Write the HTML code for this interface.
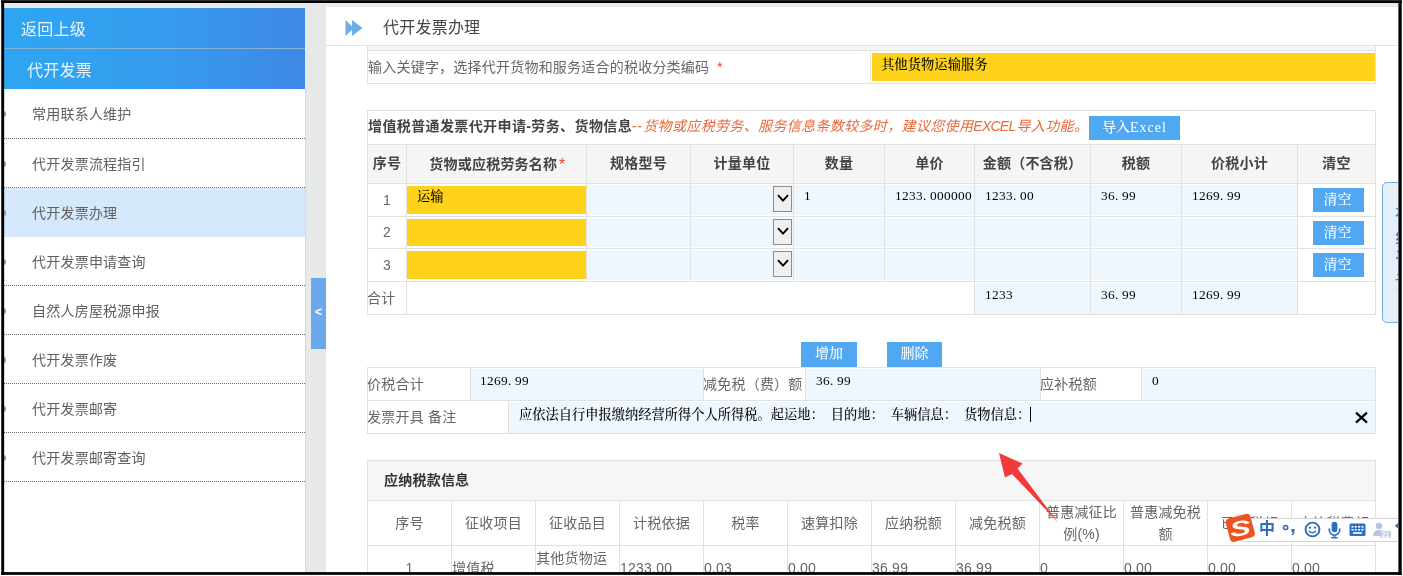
<!DOCTYPE html>
<html lang="zh-CN">
<head>
<meta charset="utf-8">
<title>代开发票办理</title>
<style>
*{box-sizing:border-box;margin:0;padding:0}
html,body{width:1403px;height:576px;overflow:hidden;background:#fff}
body{font-family:"Liberation Sans","Noto Sans CJK SC",sans-serif;font-size:14px;color:#555;position:relative;letter-spacing:.22px}
.abs{position:absolute}
#page{position:absolute;left:0;top:0;width:1403px;height:576px;overflow:hidden;background:#fff}
#inner{position:absolute;left:4px;top:3px;width:1394px;height:569px;background:#e9eaea;overflow:hidden;filter:blur(.35px)}
/* frame */
#frame{position:absolute;left:0;top:0;z-index:50}
#frametop{position:absolute;left:2px;top:0;width:1398px;height:1px;background:#2b2b2b;z-index:51}
/* sidebar : coordinates relative to #inner (offset 4,3) */
#side{position:absolute;left:0;top:5px;width:301px;height:564px;background:#fff}
#sidehead{position:absolute;left:0;top:0;width:301px;height:81px;background:linear-gradient(90deg,#2fa6f1 0%,#359cee 50%,#3e88e5 100%);color:#fff}
#sidehead .l1{position:absolute;left:17px;top:1px;height:40px;line-height:41px;font-size:16px;color:#e8f6ff}
#sidehead .sep{position:absolute;left:0;top:40px;width:301px;height:1px;background:#86b4d8}
#sidehead .l2{position:absolute;left:23px;top:42px;height:40px;line-height:41px;font-size:16px;color:#e8f6ff}
.mi{position:absolute;left:0;width:301px;height:49px;border-bottom:1px dotted #6a6a6a;line-height:51px;padding-left:28px;font-size:14px;color:#606060}
.mi.on{background:#d6e8fb}
.mi i{position:absolute;left:-3px;top:22px;width:5px;height:6px;border-radius:3px;background:#9a9a9a}
#gut{position:absolute;left:301px;top:0;width:21px;height:569px;background:#e7e9e8}
#handle{position:absolute;left:307px;top:275px;width:15px;height:71px;background:#6ba9ec;color:#fff;font-size:12px;font-weight:bold;line-height:69px;text-align:center;font-family:"Liberation Sans",sans-serif}
/* main */
#main{position:absolute;left:322px;top:4px;width:1072px;height:565px;background:#fff;overflow:hidden}
#mhead{position:absolute;left:0;top:0;width:1072px;height:39px;border-bottom:1px solid #e2e2e2}
#mhead .t{position:absolute;left:57px;top:0;line-height:41px;font-size:16px;color:#444}
#mhead svg{position:absolute;left:19px;top:12px}
table{border-collapse:collapse;table-layout:fixed;position:absolute}
td,th{border:1px solid #dedede;overflow:hidden;white-space:nowrap;font-weight:normal;padding:0;vertical-align:middle}
.inp{font-family:"Liberation Serif","Noto Serif CJK SC",serif;font-size:13.33px;color:#000;word-spacing:3.67px;letter-spacing:0;font-weight:500}
.dig{letter-spacing:.33px}
.dot{display:inline-block;width:7px;letter-spacing:0}
.blue{background:#eef6fe}
.yel{background:#ffd21c}
.btn{position:absolute;background:#4fa8f1;color:#fff;text-align:center;font-size:14px}
#ctw{position:absolute;left:0;top:39px;width:1072px;height:526px;overflow:hidden}
#ct{position:absolute;left:-326px;top:-46px;width:1403px;height:576px}
.lab{font-size:14px;color:#666}
.ttl{font-size:14px;letter-spacing:.39px;font-weight:bold;color:#444}
.ttl2{font-size:14px;font-weight:bold;color:#333}
.red{font-size:14px;letter-spacing:.35px;font-style:italic;color:#e8693c}
.th{font-size:14px;font-weight:bold;color:#444;text-align:center}
.num{font-size:14px;color:#666;text-align:center}
</style>
</head>
<body>
<div id="page">
<div id="inner">
  <div id="side">
    <div id="sidehead">
      <div class="l1">返回上级</div>
      <div class="sep"></div>
      <div class="l2">代开发票</div>
    </div>
    <div class="mi" style="top:81px;height:50px"><i></i>常用联系人维护</div>
    <div class="mi" style="top:131px;height:49px"><i></i>代开发票流程指引</div>
    <div class="mi on" style="top:180px;height:49px;border-bottom:none"><i></i>代开发票办理</div>
    <div class="mi" style="top:229px"><i></i>代开发票申请查询</div>
    <div class="mi" style="top:278px"><i></i>自然人房屋税源申报</div>
    <div class="mi" style="top:327px"><i></i>代开发票作废</div>
    <div class="mi" style="top:376px"><i></i>代开发票邮寄</div>
    <div class="mi" style="top:425px"><i></i>代开发票邮寄查询</div>
  </div>
  <div id="gut"></div><div class="abs" style="left:301px;top:86px;width:1px;height:483px;background:#d7d8da"></div>
  <div id="handle">&lt;</div>
  <div id="main">
    <div id="mhead">
      <svg width="19" height="18" viewBox="0 0 19 18"><path d="M0.5 1 L9 9 L0.5 17 Z M7 1 L17.5 9 L7 17 Z" fill="#6caeea"/></svg>
      <div class="t">代开发票办理</div>
    </div>
    <!--CS-->
<div id="ctw"><div id="ct">
<div class="abs" style="left:367px;top:40px;width:1px;height:44px;background:#e1e1e1"></div>
<div class="abs" style="left:1375px;top:40px;width:1px;height:44px;background:#e1e1e1"></div>
<div class="abs" style="left:367px;top:50px;width:1009px;height:1px;background:#e1e1e1"></div>
<div class="abs" style="left:367px;top:83px;width:1009px;height:1px;background:#e1e1e1"></div>
<div class="abs" style="left:870px;top:51px;width:1px;height:32px;background:#e8e8e8"></div>
<div class="abs lab" style="left:368px;top:51px;width:500px;height:32px;line-height:32px;white-space:nowrap;">输入关键字，选择代开货物和服务适合的税收分类编码 <span style="color:#e8442e;font-style:italic;margin-left:3px">*</span></div>
<div class="abs" style="left:872px;top:53px;width:503px;height:28px;background:#ffd21c;"></div>
<div class="abs" style="left:368px;top:46px;width:1007px;height:4px;background:#f5f5f5;"></div>
<div class="abs inp" style="left:881px;top:52px;width:300px;height:25px;line-height:25px;white-space:nowrap;">其他货物运输服务</div>
<div class="abs" style="left:368px;top:145px;width:1007px;height:38px;background:#f5f5f5;"></div>
<div class="abs" style="left:367px;top:110px;width:1009px;height:1px;background:#e1e1e1"></div>
<div class="abs" style="left:367px;top:144px;width:1009px;height:1px;background:#e1e1e1"></div>
<div class="abs" style="left:367px;top:183px;width:1009px;height:1px;background:#e1e1e1"></div>
<div class="abs" style="left:367px;top:216px;width:1009px;height:1px;background:#e1e1e1"></div>
<div class="abs" style="left:367px;top:248px;width:1009px;height:1px;background:#e1e1e1"></div>
<div class="abs" style="left:367px;top:281px;width:1009px;height:1px;background:#e1e1e1"></div>
<div class="abs" style="left:367px;top:314px;width:1009px;height:1px;background:#e1e1e1"></div>
<div class="abs" style="left:367px;top:110px;width:1px;height:205px;background:#e1e1e1"></div>
<div class="abs" style="left:1375px;top:110px;width:1px;height:205px;background:#e1e1e1"></div>
<div class="abs" style="left:406px;top:144px;width:1px;height:171px;background:#e1e1e1"></div>
<div class="abs" style="left:586px;top:144px;width:1px;height:137px;background:#e1e1e1"></div>
<div class="abs" style="left:690px;top:144px;width:1px;height:137px;background:#e1e1e1"></div>
<div class="abs" style="left:793px;top:144px;width:1px;height:137px;background:#e1e1e1"></div>
<div class="abs" style="left:884px;top:144px;width:1px;height:137px;background:#e1e1e1"></div>
<div class="abs" style="left:974px;top:144px;width:1px;height:171px;background:#e1e1e1"></div>
<div class="abs" style="left:1090px;top:144px;width:1px;height:171px;background:#e1e1e1"></div>
<div class="abs" style="left:1181px;top:144px;width:1px;height:171px;background:#e1e1e1"></div>
<div class="abs" style="left:1297px;top:144px;width:1px;height:171px;background:#e1e1e1"></div>
<div class="abs ttl" style="left:368px;top:110px;width:300px;height:32px;line-height:32px;white-space:nowrap;">增值税普通发票代开申请-劳务、货物信息</div>
<div class="abs red" style="left:631.5px;top:110px;width:460px;height:32px;line-height:32px;white-space:nowrap;"><span style="letter-spacing:1.2px">--</span>货物或应税劳务、服务信息条数较多时，建议您使用<span style="letter-spacing:-.75px">EXCEL</span><span style="margin-left:1px">导</span>入功能。</div>
<div class="btn inp" style="left:1089px;top:116px;width:91px;height:24px;line-height:23px;color:#fff">导入<span style="letter-spacing:1px">Excel</span></div>
<div class="abs th" style="left:368px;top:145px;width:38px;height:37px;line-height:37px;white-space:nowrap;">序号</div>
<div class="abs th" style="left:407px;top:145px;width:179px;height:37px;line-height:37px;white-space:nowrap;">货物或应税劳务名称<span style="color:#e8442e;font-style:italic;font-weight:normal;font-size:16px;position:relative;top:1px;left:1px">*</span></div>
<div class="abs th" style="left:587px;top:145px;width:103px;height:37px;line-height:37px;white-space:nowrap;">规格型号</div>
<div class="abs th" style="left:691px;top:145px;width:102px;height:37px;line-height:37px;white-space:nowrap;">计量单位</div>
<div class="abs th" style="left:794px;top:145px;width:90px;height:37px;line-height:37px;white-space:nowrap;">数量</div>
<div class="abs th" style="left:885px;top:145px;width:89px;height:37px;line-height:37px;white-space:nowrap;">单价</div>
<div class="abs th" style="left:975px;top:145px;width:115px;height:37px;line-height:37px;white-space:nowrap;">金额（不含税）</div>
<div class="abs th" style="left:1091px;top:145px;width:90px;height:37px;line-height:37px;white-space:nowrap;">税额</div>
<div class="abs th" style="left:1182px;top:145px;width:115px;height:37px;line-height:37px;white-space:nowrap;">价税小计</div>
<div class="abs th" style="left:1298px;top:145px;width:77px;height:37px;line-height:37px;white-space:nowrap;">清空</div>
<div class="abs num" style="left:368px;top:184px;width:38px;height:32px;line-height:32px;white-space:nowrap;">1</div>
<div class="abs" style="left:407px;top:186px;width:179px;height:28px;background:#ffd21c;"></div>
<div class="abs inp" style="left:417px;top:186px;width:100px;height:21px;line-height:21px;white-space:nowrap;">运输</div>
<div class="abs" style="left:587px;top:185px;width:103px;height:30px;background:#eef6fe;"></div>
<div class="abs" style="left:691px;top:185px;width:102px;height:30px;background:#eef6fe;"></div>
<div class="abs" style="left:794px;top:185px;width:90px;height:30px;background:#eef6fe;"></div>
<div class="abs inp dig" style="left:804px;top:185px;width:80px;height:21px;line-height:21px;white-space:nowrap;">1</div>
<div class="abs" style="left:885px;top:185px;width:89px;height:30px;background:#eef6fe;"></div>
<div class="abs inp dig" style="left:895px;top:185px;width:79px;height:21px;line-height:21px;white-space:nowrap;">1233<span class="dot">.</span>000000</div>
<div class="abs" style="left:975px;top:185px;width:115px;height:30px;background:#eef6fe;"></div>
<div class="abs inp dig" style="left:985px;top:185px;width:105px;height:21px;line-height:21px;white-space:nowrap;">1233<span class="dot">.</span>00</div>
<div class="abs" style="left:1091px;top:185px;width:90px;height:30px;background:#eef6fe;"></div>
<div class="abs inp dig" style="left:1101px;top:185px;width:80px;height:21px;line-height:21px;white-space:nowrap;">36<span class="dot">.</span>99</div>
<div class="abs" style="left:1182px;top:185px;width:115px;height:30px;background:#eef6fe;"></div>
<div class="abs inp dig" style="left:1192px;top:185px;width:105px;height:21px;line-height:21px;white-space:nowrap;">1269<span class="dot">.</span>99</div>
<div class="abs" style="left:773px;top:186px;width:19px;height:26px;background:#efefef;border:1px solid #8e8e8e"><svg class="abs" style="left:3px;top:7px" width="12" height="9" viewBox="0 0 12 9"><path d="M1 1.2 L6 6.6 L11 1.2" fill="none" stroke="#000" stroke-width="1.9"/></svg></div>
<div class="btn inp" style="left:1313px;top:188px;width:51px;height:24px;line-height:23px;padding-right:2px;color:#fff;font-size:14px">清空</div>
<div class="abs num" style="left:368px;top:217px;width:38px;height:31px;line-height:31px;white-space:nowrap;">2</div>
<div class="abs" style="left:407px;top:219px;width:179px;height:27px;background:#ffd21c;"></div>
<div class="abs" style="left:587px;top:218px;width:103px;height:29px;background:#eef6fe;"></div>
<div class="abs" style="left:691px;top:218px;width:102px;height:29px;background:#eef6fe;"></div>
<div class="abs" style="left:794px;top:218px;width:90px;height:29px;background:#eef6fe;"></div>
<div class="abs" style="left:885px;top:218px;width:89px;height:29px;background:#eef6fe;"></div>
<div class="abs" style="left:975px;top:218px;width:115px;height:29px;background:#eef6fe;"></div>
<div class="abs" style="left:1091px;top:218px;width:90px;height:29px;background:#eef6fe;"></div>
<div class="abs" style="left:1182px;top:218px;width:115px;height:29px;background:#eef6fe;"></div>
<div class="abs" style="left:773px;top:219px;width:19px;height:26px;background:#efefef;border:1px solid #8e8e8e"><svg class="abs" style="left:3px;top:7px" width="12" height="9" viewBox="0 0 12 9"><path d="M1 1.2 L6 6.6 L11 1.2" fill="none" stroke="#000" stroke-width="1.9"/></svg></div>
<div class="btn inp" style="left:1313px;top:221px;width:51px;height:24px;line-height:23px;padding-right:2px;color:#fff;font-size:14px">清空</div>
<div class="abs num" style="left:368px;top:249px;width:38px;height:32px;line-height:32px;white-space:nowrap;">3</div>
<div class="abs" style="left:407px;top:251px;width:179px;height:28px;background:#ffd21c;"></div>
<div class="abs" style="left:587px;top:250px;width:103px;height:30px;background:#eef6fe;"></div>
<div class="abs" style="left:691px;top:250px;width:102px;height:30px;background:#eef6fe;"></div>
<div class="abs" style="left:794px;top:250px;width:90px;height:30px;background:#eef6fe;"></div>
<div class="abs" style="left:885px;top:250px;width:89px;height:30px;background:#eef6fe;"></div>
<div class="abs" style="left:975px;top:250px;width:115px;height:30px;background:#eef6fe;"></div>
<div class="abs" style="left:1091px;top:250px;width:90px;height:30px;background:#eef6fe;"></div>
<div class="abs" style="left:1182px;top:250px;width:115px;height:30px;background:#eef6fe;"></div>
<div class="abs" style="left:773px;top:251px;width:19px;height:26px;background:#efefef;border:1px solid #8e8e8e"><svg class="abs" style="left:3px;top:7px" width="12" height="9" viewBox="0 0 12 9"><path d="M1 1.2 L6 6.6 L11 1.2" fill="none" stroke="#000" stroke-width="1.9"/></svg></div>
<div class="btn inp" style="left:1313px;top:253px;width:51px;height:24px;line-height:23px;padding-right:2px;color:#fff;font-size:14px">清空</div>
<div class="abs lab" style="left:367px;top:282px;width:40px;height:33px;line-height:33px;white-space:nowrap;">合计</div>
<div class="abs" style="left:975px;top:283px;width:115px;height:31px;background:#eef6fe;"></div>
<div class="abs inp dig" style="left:985px;top:284px;width:100px;height:21px;line-height:21px;white-space:nowrap;">1233</div>
<div class="abs" style="left:1091px;top:283px;width:90px;height:31px;background:#eef6fe;"></div>
<div class="abs inp dig" style="left:1101px;top:284px;width:100px;height:21px;line-height:21px;white-space:nowrap;">36<span class="dot">.</span>99</div>
<div class="abs" style="left:1182px;top:283px;width:115px;height:31px;background:#eef6fe;"></div>
<div class="abs inp dig" style="left:1192px;top:284px;width:100px;height:21px;line-height:21px;white-space:nowrap;">1269<span class="dot">.</span>99</div>
<div class="btn inp" style="left:801px;top:342px;width:56px;height:25px;line-height:24px;color:#fff;font-size:14px">增加</div>
<div class="btn inp" style="left:887px;top:342px;width:55px;height:25px;line-height:24px;color:#fff;font-size:14px">删除</div>
<div class="abs" style="left:367px;top:367px;width:1009px;height:1px;background:#e1e1e1"></div>
<div class="abs" style="left:367px;top:400px;width:1009px;height:1px;background:#e1e1e1"></div>
<div class="abs" style="left:367px;top:433px;width:1009px;height:1px;background:#e1e1e1"></div>
<div class="abs" style="left:367px;top:367px;width:1px;height:67px;background:#e1e1e1"></div>
<div class="abs" style="left:1375px;top:367px;width:1px;height:67px;background:#e1e1e1"></div>
<div class="abs" style="left:470px;top:367px;width:1px;height:33px;background:#e1e1e1"></div>
<div class="abs" style="left:703px;top:367px;width:1px;height:33px;background:#e1e1e1"></div>
<div class="abs" style="left:805px;top:367px;width:1px;height:33px;background:#e1e1e1"></div>
<div class="abs" style="left:1040px;top:367px;width:1px;height:33px;background:#e1e1e1"></div>
<div class="abs" style="left:1141px;top:367px;width:1px;height:33px;background:#e1e1e1"></div>
<div class="abs" style="left:508px;top:400px;width:1px;height:33px;background:#e1e1e1"></div>
<div class="abs lab" style="left:367px;top:368px;width:100px;height:32px;line-height:32px;white-space:nowrap;">价税合计</div>
<div class="abs" style="left:471px;top:369px;width:232px;height:31px;background:#eef6fe;"></div>
<div class="abs inp dig" style="left:480px;top:370px;width:100px;height:21px;line-height:21px;white-space:nowrap;">1269<span class="dot">.</span>99</div>
<div class="abs lab" style="left:703px;top:368px;width:101px;height:32px;line-height:32px;white-space:nowrap;">减免税（费）额</div>
<div class="abs" style="left:806px;top:369px;width:234px;height:31px;background:#eef6fe;"></div>
<div class="abs inp dig" style="left:816px;top:370px;width:100px;height:21px;line-height:21px;white-space:nowrap;">36<span class="dot">.</span>99</div>
<div class="abs lab" style="left:1040px;top:368px;width:100px;height:32px;line-height:32px;white-space:nowrap;">应补税额</div>
<div class="abs" style="left:1142px;top:369px;width:233px;height:31px;background:#eef6fe;"></div>
<div class="abs inp dig" style="left:1152px;top:370px;width:100px;height:21px;line-height:21px;white-space:nowrap;">0</div>
<div class="abs lab" style="left:367px;top:401px;width:140px;height:32px;line-height:32px;white-space:nowrap;">发票开具 备注</div>
<div class="abs" style="left:509px;top:402px;width:866px;height:31px;background:#eef6fe;"></div>
<div class="abs inp" style="left:519px;top:401px;width:520px;height:28px;line-height:28px;white-space:nowrap;font-size:13.25px">应依法自行申报缴纳经营所得个人所得税。起运地： 目的地： 车辆信息： 货物信息：</div>
<div class="abs" style="left:1030px;top:407px;width:1px;height:15px;background:#000;"></div>
<svg class="abs" style="left:1354px;top:411px" width="15" height="13" viewBox="0 0 15 13"><path d="M2 1.6 L13 11.6 M13 1.6 L2 11.6" stroke="#000" stroke-width="2.1" fill="none"/></svg>
<div class="abs" style="left:368px;top:461px;width:1007px;height:39px;background:#f6f6f6;"></div>
<div class="abs" style="left:367px;top:460px;width:1009px;height:1px;background:#e1e1e1"></div>
<div class="abs" style="left:367px;top:500px;width:1009px;height:1px;background:#e1e1e1"></div>
<div class="abs" style="left:367px;top:545px;width:1009px;height:1px;background:#e1e1e1"></div>
<div class="abs" style="left:367px;top:460px;width:1px;height:116px;background:#e1e1e1"></div>
<div class="abs" style="left:1375px;top:460px;width:1px;height:116px;background:#e1e1e1"></div>
<div class="abs" style="left:451px;top:500px;width:1px;height:76px;background:#e1e1e1"></div>
<div class="abs" style="left:535px;top:500px;width:1px;height:76px;background:#e1e1e1"></div>
<div class="abs" style="left:619px;top:500px;width:1px;height:76px;background:#e1e1e1"></div>
<div class="abs" style="left:703px;top:500px;width:1px;height:76px;background:#e1e1e1"></div>
<div class="abs" style="left:787px;top:500px;width:1px;height:76px;background:#e1e1e1"></div>
<div class="abs" style="left:871px;top:500px;width:1px;height:76px;background:#e1e1e1"></div>
<div class="abs" style="left:955px;top:500px;width:1px;height:76px;background:#e1e1e1"></div>
<div class="abs" style="left:1039px;top:500px;width:1px;height:76px;background:#e1e1e1"></div>
<div class="abs" style="left:1123px;top:500px;width:1px;height:76px;background:#e1e1e1"></div>
<div class="abs" style="left:1207px;top:500px;width:1px;height:76px;background:#e1e1e1"></div>
<div class="abs" style="left:1291px;top:500px;width:1px;height:76px;background:#e1e1e1"></div>
<div class="abs ttl2" style="left:384px;top:461px;width:200px;height:39px;line-height:39px;white-space:nowrap;">应纳税款信息</div>
<div class="abs lab" style="left:368px;top:501px;width:83px;height:44px;line-height:44px;white-space:nowrap;text-align:center">序号</div>
<div class="abs lab" style="left:452px;top:501px;width:83px;height:44px;line-height:44px;white-space:nowrap;text-align:center">征收项目</div>
<div class="abs lab" style="left:536px;top:501px;width:83px;height:44px;line-height:44px;white-space:nowrap;text-align:center">征收品目</div>
<div class="abs lab" style="left:620px;top:501px;width:83px;height:44px;line-height:44px;white-space:nowrap;text-align:center">计税依据</div>
<div class="abs lab" style="left:704px;top:501px;width:83px;height:44px;line-height:44px;white-space:nowrap;text-align:center">税率</div>
<div class="abs lab" style="left:788px;top:501px;width:83px;height:44px;line-height:44px;white-space:nowrap;text-align:center">速算扣除</div>
<div class="abs lab" style="left:872px;top:501px;width:83px;height:44px;line-height:44px;white-space:nowrap;text-align:center">应纳税额</div>
<div class="abs lab" style="left:956px;top:501px;width:83px;height:44px;line-height:44px;white-space:nowrap;text-align:center">减免税额</div>
<div class="abs lab" style="left:1040px;top:501px;width:83px;height:44px;line-height:22px;text-align:center">普惠减征比<br>例(%)</div>
<div class="abs lab" style="left:1124px;top:501px;width:83px;height:44px;line-height:22px;text-align:center">普惠减免税<br>额</div>
<div class="abs lab" style="left:1208px;top:501px;width:83px;height:44px;line-height:44px;white-space:nowrap;text-align:center">已缴税额</div>
<div class="abs lab" style="left:1292px;top:501px;width:83px;height:44px;line-height:44px;white-space:nowrap;text-align:center">应补税费额</div>
<div class="abs lab" style="left:368px;top:557px;width:83px;height:22px;line-height:22px;white-space:nowrap;text-align:center">1</div>
<div class="abs lab" style="left:452px;top:557px;width:83px;height:22px;line-height:22px;white-space:nowrap;">增值税</div>
<div class="abs lab" style="left:536px;top:548px;width:83px;line-height:21px">其他货物运<br>输服务</div>
<div class="abs lab" style="left:620px;top:557px;width:83px;height:22px;line-height:22px;white-space:nowrap;">1233.00</div>
<div class="abs lab" style="left:704px;top:557px;width:83px;height:22px;line-height:22px;white-space:nowrap;">0.03</div>
<div class="abs lab" style="left:788px;top:557px;width:83px;height:22px;line-height:22px;white-space:nowrap;">0.00</div>
<div class="abs lab" style="left:872px;top:557px;width:83px;height:22px;line-height:22px;white-space:nowrap;">36.99</div>
<div class="abs lab" style="left:956px;top:557px;width:83px;height:22px;line-height:22px;white-space:nowrap;">36.99</div>
<div class="abs lab" style="left:1040px;top:557px;width:83px;height:22px;line-height:22px;white-space:nowrap;">0</div>
<div class="abs lab" style="left:1124px;top:557px;width:83px;height:22px;line-height:22px;white-space:nowrap;">0.00</div>
<div class="abs lab" style="left:1208px;top:557px;width:83px;height:22px;line-height:22px;white-space:nowrap;">0.00</div>
<div class="abs lab" style="left:1292px;top:557px;width:83px;height:22px;line-height:22px;white-space:nowrap;">0.00</div>
<div class="abs" style="left:1382px;top:182px;width:30px;height:141px;background:#e3f0fc;border:1px solid #6fb0ea;border-radius:5px;overflow:hidden"><div class="abs" style="left:12px;top:21px;width:18px;font-size:18px;line-height:22.5px;color:#2f7fd6">在线咨询</div></div>
<svg class="abs" style="left:990px;top:445px" width="80" height="85" viewBox="990 445 80 85"><polygon points="999,453 1022.5,463.5 1017.5,468.5 1058,522.5 1012,474 1005,477.5" fill="#f23a3a"/></svg>
<div class="abs" style="left:1240px;top:518px;width:170px;height:24px;background:#fff;border:1px solid #d4d4d4;border-radius:2px"></div>
<svg class="abs" style="left:1222px;top:510px" width="36" height="36" viewBox="0 0 36 36"><g transform="rotate(-15 18 18)"><rect x="5.5" y="6" width="25.5" height="24" rx="4" fill="#f0521f"/></g><text x="0" y="0" text-anchor="middle" font-family="Liberation Sans, sans-serif" font-weight="bold" font-style="italic" font-size="21" fill="#fff" transform="translate(19.4 25.6) rotate(-8) scale(1.5 1)">S</text></svg>
<div class="abs" style="left:1259px;top:518px;width:18px;height:22px;line-height:22px;font-size:16px;font-weight:bold;color:#2a6fc4;font-family:'Liberation Sans','Noto Sans CJK SC',sans-serif">中</div>
<svg class="abs" style="left:1281px;top:523px" width="9" height="9" viewBox="0 0 9 9"><circle cx="4.6" cy="4.5" r="2.1" fill="none" stroke="#2a6fc4" stroke-width="1.5"/></svg>
<div class="abs" style="left:1290px;top:514px;width:8px;height:22px;line-height:22px;font-size:21px;font-weight:bold;color:#2a6fc4">,</div>
<svg class="abs" style="left:1304px;top:521px" width="17" height="17" viewBox="0 0 17 17"><circle cx="8.5" cy="8.5" r="6.9" fill="none" stroke="#2a6fc4" stroke-width="1.9"/><circle cx="6" cy="6.6" r="1.2" fill="#2a6fc4"/><circle cx="11" cy="6.6" r="1.2" fill="#2a6fc4"/><path d="M5 10 Q8.5 13.6 12 10" fill="none" stroke="#2a6fc4" stroke-width="1.5"/></svg>
<svg class="abs" style="left:1327px;top:521px" width="15" height="18" viewBox="0 0 15 18"><rect x="4.6" y="0.8" width="5.8" height="10.4" rx="2.9" fill="#2a6fc4"/><path d="M2.3 7.5 V9 A5.2 5.2 0 0 0 12.7 9 V7.5" fill="none" stroke="#2a6fc4" stroke-width="1.6"/><path d="M7.5 14 V16.5 M4.3 16.8 H10.7" stroke="#2a6fc4" stroke-width="1.6"/></svg>
<svg class="abs" style="left:1349px;top:523px" width="17" height="14" viewBox="0 0 17 14"><rect x="0.5" y="0.5" width="16" height="12.5" rx="1.5" fill="#2a6fc4"/><g fill="#fff"><rect x="2.5" y="3" width="2" height="1.6"/><rect x="5.8" y="3" width="2" height="1.6"/><rect x="9.1" y="3" width="2" height="1.6"/><rect x="12.4" y="3" width="2" height="1.6"/><rect x="2.5" y="6" width="2" height="1.6"/><rect x="5.8" y="6" width="2" height="1.6"/><rect x="9.1" y="6" width="2" height="1.6"/><rect x="12.4" y="6" width="2" height="1.6"/><rect x="4" y="9.2" width="9" height="1.6"/></g></svg>
<svg class="abs" style="left:1372px;top:522px" width="20" height="16" viewBox="0 0 20 16"><circle cx="7" cy="4" r="3.2" fill="#b4c6dc"/><path d="M1 14 Q1 8 7 8 Q13 8 13 14 Z" fill="#b4c6dc"/><rect x="8" y="9" width="11" height="6.5" rx="1" fill="#c3d0e0"/><text x="13.5" y="14.6" font-size="6.5" fill="#fff" text-anchor="middle" font-family="Liberation Sans, sans-serif" font-weight="bold">21</text></svg>
<svg class="abs" style="left:1394px;top:522px" width="10" height="14" viewBox="0 0 10 14"><path d="M5 0.5 L1 3.5 L3 6 L5 5 V12 H10 V0.5 Z" fill="#2a6fc4"/></svg>
</div></div>
<!--CE-->
  </div>
</div>
<svg id="frame" width="1403" height="576" viewBox="0 0 1403 576"><rect x="1.25" y="0" width="2.9" height="575" fill="#000"/><rect x="1398.4" y="0" width="3.3" height="575" fill="#000"/><rect x="1.25" y="0" width="1400.45" height="3" fill="#000"/><rect x="1.25" y="572.1" width="1400.45" height="2.75" fill="#000"/><rect x="1.25" y="0" width="1400.45" height="1.1" fill="#2b2b2b"/></svg>
</div>
</body>
</html>
